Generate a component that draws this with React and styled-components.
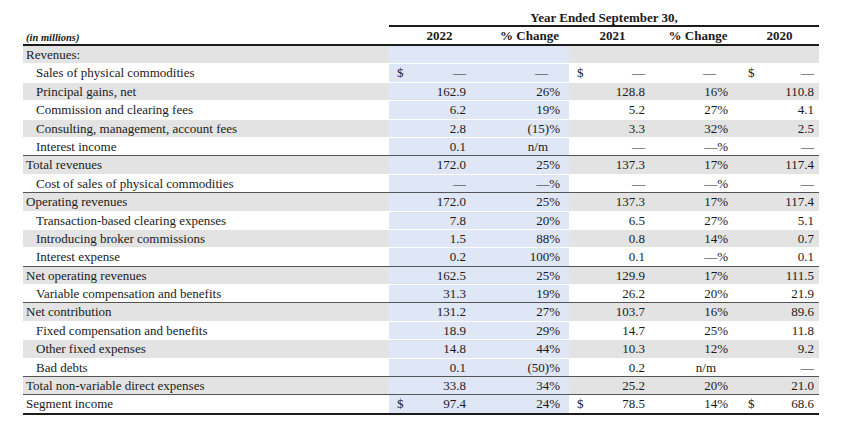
import React from 'react';
import styled, { createGlobalStyle } from 'styled-components';

const GlobalStyle = createGlobalStyle`
    html, body {
        margin: 0;
        padding: 0;
        background: #ffffff;
    }
    body {
        font-family: "Liberation Serif", "Times New Roman", serif;
        color: #1a1a1a;
    }
`;

// value, hasDollar, isPct for each of the 5 numeric columns
const rows = [
    { label: 'Revenues:', top: true, vals: ['', '', '', '', ''] },
    { label: 'Sales of physical commodities', vals: ['$|—', '—', '$|—', '—', '$|—'] },
    { label: 'Principal gains, net', vals: ['162.9', '26%', '128.8', '16%', '110.8'] },
    { label: 'Commission and clearing fees', vals: ['6.2', '19%', '5.2', '27%', '4.1'] },
    { label: 'Consulting, management, account fees', vals: ['2.8', '(15)%', '3.3', '32%', '2.5'] },
    { label: 'Interest income', vals: ['0.1', 'n/m', '—', '—%', '—'] },
    { label: 'Total revenues', top: true, rule: true, vals: ['172.0', '25%', '137.3', '17%', '117.4'] },
    { label: 'Cost of sales of physical commodities', vals: ['—', '—%', '—', '—%', '—'] },
    { label: 'Operating revenues', top: true, rule: true, vals: ['172.0', '25%', '137.3', '17%', '117.4'] },
    { label: 'Transaction-based clearing expenses', vals: ['7.8', '20%', '6.5', '27%', '5.1'] },
    { label: 'Introducing broker commissions', vals: ['1.5', '88%', '0.8', '14%', '0.7'] },
    { label: 'Interest expense', vals: ['0.2', '100%', '0.1', '—%', '0.1'] },
    { label: 'Net operating revenues', top: true, rule: true, vals: ['162.5', '25%', '129.9', '17%', '111.5'] },
    { label: 'Variable compensation and benefits', vals: ['31.3', '19%', '26.2', '20%', '21.9'] },
    { label: 'Net contribution', top: true, rule: true, vals: ['131.2', '27%', '103.7', '16%', '89.6'] },
    { label: 'Fixed compensation and benefits', vals: ['18.9', '29%', '14.7', '25%', '11.8'] },
    { label: 'Other fixed expenses', vals: ['14.8', '44%', '10.3', '12%', '9.2'] },
    { label: 'Bad debts', vals: ['0.1', '(50)%', '0.2', 'n/m', '—'] },
    { label: 'Total non-variable direct expenses', top: true, rule: true, vals: ['33.8', '34%', '25.2', '20%', '21.0'] },
    { label: 'Segment income', top: true, rule: true, last: true, vals: ['$|97.4', '24%', '$|78.5', '14%', '$|68.6'] },
];

const padRight = [24, 9, 11, 12, 5];
const headers = ['2022', '% Change', '2021', '% Change', '2020'];

export default function App() {
    return (
        <Page>
            <GlobalStyle />
            <Table>
                <TitleRow>
                    <span />
                    <Title>Year Ended September 30,</Title>
                </TitleRow>
                <HeadRow>
                    <Units>(in millions)</Units>
                    {headers.map((h, i) => (
                        <HeadCell key={i}>{h}</HeadCell>
                    ))}
                </HeadRow>
                {rows.map((r, ri) => (
                    <Row key={ri} $rule={r.rule} $first={ri === 0} $last={r.last}>
                        <Label $gray={ri % 2 === 0} $top={r.top}>{r.label}</Label>
                        {r.vals.map((v, ci) => {
                            const [dollar, val] = v.includes('|') ? v.split('|') : ['', v];
                            const pct = ci === 1 || ci === 3;
                            const extra = pct && val && !val.endsWith('%') ? 12 : 0;
                            return (
                                <Cell
                                    key={ci}
                                    $gray={ri % 2 === 0}
                                    $blue={ci < 2}
                                    $pr={padRight[ci] + extra}
                                >
                                    <Dollar>{dollar}</Dollar>
                                    <span>{val}</span>
                                </Cell>
                            );
                        })}
                    </Row>
                ))}
            </Table>
        </Page>
    );
}

/* ---------------- styles ---------------- */

const COLS = '366px 101px 79px 87px 84px 79px';

const Page = styled.div`
    width: 861px;
    height: 430px;
    padding: 10px 0 0 23px;
    box-sizing: border-box;
`;

const Table = styled.div`
    width: 796px;
    font-size: 13px;
`;

const TitleRow = styled.div`
    display: grid;
    grid-template-columns: 366px 430px;
`;

const Title = styled.div`
    font-weight: bold;
    text-align: center;
    height: 15px;
    line-height: 15px;
    border-bottom: 2px solid #1c1c1c;
`;

const HeadRow = styled.div`
    display: grid;
    grid-template-columns: ${COLS};
    height: 17px;
    align-items: center;
    border-bottom: 2px solid #1c1c1c;
`;

const Units = styled.div`
    font-style: italic;
    font-weight: bold;
    font-size: 10.5px;
    padding-left: 3px;
    padding-top: 3px;
`;

const HeadCell = styled.div`
    font-weight: bold;
    text-align: center;
`;

const Row = styled.div`
    display: grid;
    grid-template-columns: ${COLS};
    height: 17.4px;
    border-top: ${p => (p.$first ? 'none' : p.$rule ? '1px solid #555' : '1px solid #fff')};
    border-bottom: ${p => (p.$last ? '2px solid #1c1c1c' : 'none')};
`;

const Label = styled.div`
    background: ${p => (p.$gray ? '#e3e3e3' : '#ffffff')};
    padding-left: ${p => (p.$top ? '3px' : '13px')};
    line-height: 17.4px;
    white-space: nowrap;
`;

const Cell = styled.div`
    display: flex;
    justify-content: space-between;
    align-items: center;
    padding: 0 ${p => p.$pr}px 0 8px;
    line-height: 17.4px;
    background: ${p => (p.$blue ? '#dfe6f6' : p.$gray ? '#e3e3e3' : '#ffffff')};
`;

const Dollar = styled.span`
    min-width: 1px;
`;
